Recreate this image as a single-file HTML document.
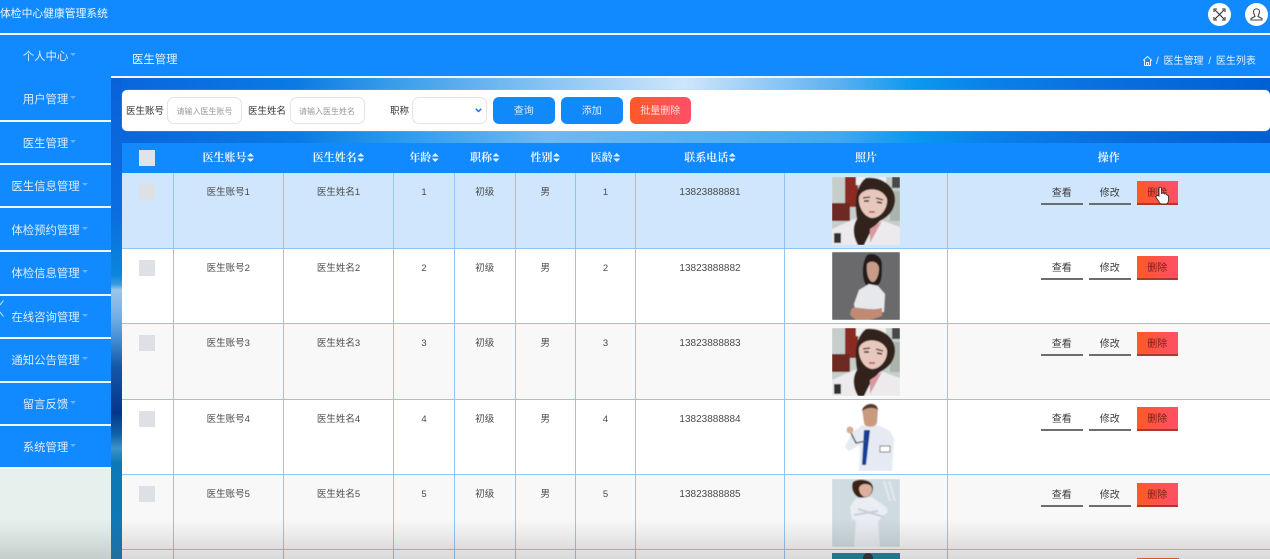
<!DOCTYPE html>
<html lang="zh-CN">
<head>
<meta charset="utf-8">
<title>体检中心健康管理系统</title>
<style>
*{box-sizing:border-box;margin:0;padding:0}
html,body{width:1270px;height:559px;overflow:hidden;background:#fff}
body{position:relative;font-family:"Liberation Sans","Noto Sans CJK SC",sans-serif;color:#444}
#wrap{position:absolute;left:0;top:0;width:1270px;height:559px;overflow:hidden;filter:blur(.35px)}
.abs{position:absolute}
#strip{left:111px;top:78px;width:11px;height:481px;background:linear-gradient(180deg,#0a62d8 0,#0a6ee0 28%,#0a86dc 41%,#3c9ce0 43%,#9cc6ea 44%,#6eaee4 50%,#3d88d0 55%,#1458a8 60%,#04358c 69.600%,#0e62a8 74%,#3a94c8 77%,#0d78b8 80%,#1078b4 100%)}
#hg1{left:122px;top:78px;width:1148px;height:18px;background:linear-gradient(90deg,#0a66dc 0,#0a7ae4 15%,#3a9eea 24%,#cfe6fb 49%,#5ab0f0 62.500%,#0b98f0 69%,#0a80e8 76%,#0a70de 85%,#0060d4 100%)}
#hg2{left:122px;top:125px;width:1148px;height:18px;background:linear-gradient(90deg,#0a66dc 0,#0a7ae4 15%,#2a9aee 24%,#70b8f2 37%,#40a8f0 62.500%,#0a98f0 69%,#0a80e8 76%,#0a70de 85%,#0060d4 100%)}
#top{left:0;top:0;width:1270px;height:33px;background:#1189ff}
#bar{left:0;top:35px;width:1270px;height:41px;background:#1189ff}
.wl{position:absolute;background:#eef6ff;height:2px}
#title{left:0;top:7px;font-size:10.8px;color:#f1f7ff;line-height:14px;white-space:nowrap}
#crumbT{left:132px;top:53px;font-size:11.4px;color:#e8f2ff;line-height:14px}
#crumb{left:1156px;top:55px;font-size:10px;color:#e3efff;line-height:14px;white-space:nowrap;word-spacing:2px}
.circ{position:absolute;width:23px;height:23px;border-radius:50%;background:#fff;top:3px}
#side{left:0;top:35px;width:111px;height:433px;background:#1189ff}
#sideb{left:0;top:468px;width:111px;height:91px;background:#e6f1ee}
.mi{position:absolute;left:0;width:99px;height:14px;text-align:center;font-size:11.4px;line-height:14px;color:#dcebff;white-space:nowrap}
.mi i{display:inline-block;width:0;height:0;border:3px solid transparent;border-top:3px solid #6fb0f2;border-bottom:0;margin-left:2px;vertical-align:4px}
#search{left:122px;top:90px;width:1148px;height:41px;background:#fff;border-radius:5px;box-shadow:0 0 1px #9fd0f8}
.lab{position:absolute;top:106px;font-size:9.5px;line-height:12px;color:#333;white-space:nowrap}
.inp{position:absolute;top:97px;width:75px;height:27px;border:1.5px solid #e3e3e3;border-radius:7px;background:#fff;font-size:8px;line-height:27px;text-align:center;color:#999}
.sbtn{position:absolute;top:97px;width:61.5px;height:27px;border-radius:6px;background:#1189f8;color:#d8ebff;font-size:10px;line-height:30px;text-align:center}
table{position:absolute;left:122px;top:143px;width:1148px;border-collapse:collapse;table-layout:fixed;font-size:9.5px;color:#4a4a4a}
th{height:30px;background:#1189ff;color:#e9f3ff;font:bold 11px/30px "Liberation Serif","Noto Serif CJK SC",serif;text-align:center;white-space:nowrap;border:0;padding:0}
th u{display:inline-block;text-decoration:none;width:7px;height:9px;margin-left:.5px;vertical-align:-1px;background:#e9f3ff;clip-path:path('M3.500 0L7 3.500H0ZM3.500 9L0 5.500H7Z')}
td{height:75.4px;border:1px solid #94c4f2;border-top:0;padding:13px 0 0;vertical-align:top;text-align:center;line-height:13px;white-space:nowrap;position:relative}
td:first-child{border-left:0}
td:last-child{border-right:0}
td.tel{font-size:10px}
tr.s td{background:#cfe6fd}
tr.w td{background:#fff}
tr.g td{background:#f8f8f8}
.cb{display:block;width:16px;height:16px;background:#dde0e4;margin:-2px 0 0 17px}
th .cb{display:inline-block;margin:0;vertical-align:middle;position:relative;left:-.5px;background:#e0e3e8}
.ph{position:absolute;left:47px;top:3.5px;width:68px;height:68px;display:block}
.a{position:absolute;top:7.5px;width:41.5px;height:24px;line-height:25px;font-size:10px;text-align:center;color:#3c3c3c;border-bottom:2px solid #6d6d6d}
.a.d{background:linear-gradient(90deg,#ff5828,#ff4f68);color:#7a1d1d;border-bottom-color:#a83a30}
#fade{left:0;top:518px;width:1270px;height:41px;background:linear-gradient(180deg,rgba(90,90,90,0),rgba(90,90,90,.06) 30%,rgba(80,80,80,.22) 100%);pointer-events:none}
</style>
</head>
<body>
<svg width="0" height="0" style="position:absolute">
<defs>
<filter id="b"><feGaussianBlur stdDeviation=".6"/></filter>
<symbol id="p1" viewBox="0 0 68 68">
<g filter="url(#b)"><rect width="68" height="68" fill="#c6cecb"/><rect x="13" y="0" width="13" height="30" fill="#8a2a22"/><rect x="0" y="26" width="18" height="18" fill="#6e2a24"/><rect x="24" y="0" width="30" height="8" fill="#eef0ee"/><rect x="60" y="0" width="8" height="11" fill="#4a4a48"/><rect x="58" y="14" width="10" height="30" fill="#aab4ac"/>
<path d="M0 52L22 42L46 42L68 50V68H0Z" fill="#eceaec"/>
<path d="M34 1C50-1 64 10 63 24C62 34 56 40 48 44L40 52L32 68L26 68C20 58 21 48 25 42C22 26 24 8 34 1Z" fill="#33231f"/>
<path d="M27 20C30 10 50 9 55 22C56 32 48 41 40 41C32 40 26 30 27 20Z" fill="#e8c8bc"/>
<path d="M31 21L38 20M44 21L51 23" stroke="#3a2a26" stroke-width="1.200"/><path d="M32 24L37 24M45 25L50 26" stroke="#2a1c1a" stroke-width="1.500"/><path d="M37 35L43 35" stroke="#b8555a" stroke-width="1.600"/>
<path d="M38 52L50 44L38 66Z" fill="#d89aa0"/>
<rect x="2" y="56" width="7" height="10" fill="#333"/></g>
</symbol>
<symbol id="p2" viewBox="0 0 68 68">
<g filter="url(#b)"><rect width="68" height="68" fill="#6a6a6c"/>
<path d="M35 3C42 0 50 4 50 13C50 22 50 30 46 33L34 33C30 28 29 12 35 3Z" fill="#231d1c"/>
<path d="M35 12C38 8 46 9 47 16C47 25 43 30 41 30C37 30 34 22 35 12Z" fill="#c99c88"/>
<path d="M37 32L27 38L22 52L24 62L52 60L53 42L46 34Z" fill="#e6e8ec"/>
<path d="M19 58C22 52 34 60 50 56L50 64L38 68L24 68L18 63Z" fill="#c08a74"/></g>
</symbol>
<symbol id="p4" viewBox="0 0 68 68">
<g filter="url(#b)"><rect width="68" height="68" fill="#fff"/>
<path d="M30 22L20 30L13 44L17 48L28 42L27 68L60 68L62 36L58 28L46 22Z" fill="#e6eaf3"/>
<path d="M30 6C33 0 45 0 46 6L45 20C43 25 33 25 32 20Z" fill="#c89a80"/><path d="M30 8C31-1 46-2 46 7C43 4 35 4 30 8Z" fill="#5a3a28"/>
<path d="M32 27L38 27L34 62L30 62Z" fill="#153f94"/>
<path d="M18 28L24 40L34 38" stroke="#555" stroke-width="1.4" fill="none"/><circle cx="18" cy="27" r="3.500" fill="#d5ae98"/><rect x="48" y="43" width="10" height="6" fill="#fff" stroke="#777"/></g>
</symbol>
<symbol id="p5" viewBox="0 0 68 68">
<g filter="url(#b)"><rect width="68" height="68" fill="#cfdbe0"/><path d="M52 2L58 22M57 2L63 22" stroke="#e2eaee" stroke-width="2"/>
<path d="M21 3C26-1 41 0 41 9C41 15 36 19 30 19C23 19 18 10 21 3Z" fill="#3e2418"/><path d="M27 9C29 3 40 4 40 10C40 15 36 18 33 18C29 17 27 13 27 9Z" fill="#dcb09c"/>
<path d="M24 19L18 28L20 40L24 42L22 68L48 68L46 42L56 33L54 28L40 18Z" fill="#eaedf3"/><path d="M22 36L46 32M26 30L52 38" stroke="#c9ced8" stroke-width="2"/></g>
</symbol>
</defs>
</svg>
<div id="wrap">
<div class="abs" id="strip"></div>
<div class="abs" id="hg1"></div>
<div class="abs" id="hg2"></div>

<div class="abs" id="top"></div>
<div class="wl" style="left:0;top:33px;width:1270px"></div>
<div class="abs" id="bar"></div>
<div class="wl" style="left:0;top:76px;width:1270px"></div>
<div class="abs" id="title">体检中心健康管理系统</div>
<div class="abs" id="crumbT">医生管理</div>
<svg class="abs" style="left:1142px;top:55px" width="11" height="12" viewBox="0 0 11 12" fill="none" stroke="#e3efff" stroke-width="1"><path d="M1 5.500L5.500 1.500L10 5.500M2.500 5V10.500H8.500V5M4.500 10.500V7.500H6.500V10.500"/></svg>
<div class="abs" id="crumb">/ 医生管理 / 医生列表</div>

<div class="circ" style="left:1207.500px"><svg width="23" height="23" viewBox="0 0 23 23" fill="none" stroke="#333" stroke-width="1.100"><path d="M7 7L16 16M16 7L7 16M6 9V6H9M14 6H17V9M17 14V17H14M9 17H6V14"/></svg></div>
<div class="circ" style="left:1244.500px"><svg width="23" height="23" viewBox="0 0 23 23" fill="none" stroke="#444" stroke-width="1.100"><path d="M8.500 8.500C8.500 5 14.500 5 14.500 8.500C14.500 11 13 12.500 13 13.500L17 15.500V17H6V15.500L10 13.500C10 12.500 8.500 11 8.500 8.500Z"/></svg></div>

<div class="abs" id="side"></div>
<div class="abs" id="sideb"></div>
<div class="wl" style="left:0;top:119.500px;width:111px"></div>
<div class="wl" style="left:0;top:163px;width:111px"></div>
<div class="wl" style="left:0;top:206.400px;width:111px"></div>
<div class="wl" style="left:0;top:249.800px;width:111px"></div>
<div class="wl" style="left:0;top:293.500px;width:111px"></div>
<div class="wl" style="left:0;top:337px;width:111px"></div>
<div class="wl" style="left:0;top:380.500px;width:111px"></div>
<div class="wl" style="left:0;top:423.800px;width:111px"></div>
<div class="wl" style="left:0;top:467px;width:111px"></div>
<div class="mi" style="top:49.500px">个人中心<i></i></div>
<div class="mi" style="top:93px">用户管理<i></i></div>
<div class="mi" style="top:136.500px">医生管理<i></i></div>
<div class="mi" style="top:180px">医生信息管理<i></i></div>
<div class="mi" style="top:223.500px">体检预约管理<i></i></div>
<div class="mi" style="top:267px">体检信息管理<i></i></div>
<div class="mi" style="top:310.500px">在线咨询管理<i></i></div>
<div class="mi" style="top:354px">通知公告管理<i></i></div>
<div class="mi" style="top:397.500px">留言反馈<i></i></div>
<div class="mi" style="top:441px">系统管理<i></i></div>
<svg class="abs" style="left:0;top:299px" width="6" height="19" viewBox="0 0 6 19" fill="none" stroke="#cfe4fa" stroke-width="1"><path d="M3.500 1.500L0 6M0 13L3.500 17.500"/></svg>

<div class="abs" id="search"></div>
<div class="lab" style="left:126px">医生账号</div>
<div class="inp" style="left:167px">请输入医生账号</div>
<div class="lab" style="left:248px">医生姓名</div>
<div class="inp" style="left:289.500px">请输入医生姓名</div>
<div class="lab" style="left:390px">职称</div>
<div class="inp" style="left:412px"><svg style="position:absolute;right:4px;top:10px" width="7" height="5" viewBox="0 0 7 5" fill="none" stroke="#1a74d0" stroke-width="1.500"><path d="M.8 .8L3.500 3.500L6.200 .8"/></svg></div>
<div class="sbtn" style="left:493px">查询</div>
<div class="sbtn" style="left:561px">添加</div>
<div class="sbtn" style="left:629.500px;background:linear-gradient(90deg,#ff5828,#ff4f68);color:#ffdcd8">批量删除</div>

<table>
<colgroup><col style="width:51px"><col style="width:110.500px"><col style="width:110px"><col style="width:61px"><col style="width:60.500px"><col style="width:60.500px"><col style="width:60px"><col style="width:149px"><col style="width:163px"><col style="width:322.500px"></colgroup>
<tr><th><span class="cb"></span></th><th>医生账号<u></u></th><th>医生姓名<u></u></th><th>年龄<u></u></th><th>职称<u></u></th><th>性别<u></u></th><th>医龄<u></u></th><th>联系电话<u></u></th><th>照片</th><th>操作</th></tr>
<tr class="s"><td><span class="cb"></span></td><td>医生账号1</td><td>医生姓名1</td><td>1</td><td>初级</td><td>男</td><td>1</td><td class="tel">13823888881</td><td><svg class="ph"><use href="#p1"/></svg></td><td><div class="a" style="left:93px">查看</div><div class="a" style="left:141px">修改</div><div class="a d" style="left:188.500px">删除</div></td></tr>
<tr class="w"><td><span class="cb"></span></td><td>医生账号2</td><td>医生姓名2</td><td>2</td><td>初级</td><td>男</td><td>2</td><td class="tel">13823888882</td><td><svg class="ph"><use href="#p2"/></svg></td><td><div class="a" style="left:93px">查看</div><div class="a" style="left:141px">修改</div><div class="a d" style="left:188.500px">删除</div></td></tr>
<tr class="g"><td><span class="cb"></span></td><td>医生账号3</td><td>医生姓名3</td><td>3</td><td>初级</td><td>男</td><td>3</td><td class="tel">13823888883</td><td><svg class="ph"><use href="#p1"/></svg></td><td><div class="a" style="left:93px">查看</div><div class="a" style="left:141px">修改</div><div class="a d" style="left:188.500px">删除</div></td></tr>
<tr class="w"><td><span class="cb"></span></td><td>医生账号4</td><td>医生姓名4</td><td>4</td><td>初级</td><td>男</td><td>4</td><td class="tel">13823888884</td><td><svg class="ph"><use href="#p4"/></svg></td><td><div class="a" style="left:93px">查看</div><div class="a" style="left:141px">修改</div><div class="a d" style="left:188.500px">删除</div></td></tr>
<tr class="g"><td><span class="cb"></span></td><td>医生账号5</td><td>医生姓名5</td><td>5</td><td>初级</td><td>男</td><td>5</td><td class="tel">13823888885</td><td><svg class="ph"><use href="#p5"/></svg></td><td><div class="a" style="left:93px">查看</div><div class="a" style="left:141px">修改</div><div class="a d" style="left:188.500px">删除</div></td></tr>
</table>

<div class="abs" style="left:122px;top:549.500px;width:1148px;height:9.500px;background:#fff;overflow:hidden">
<div class="abs" style="left:710px;top:3.500px;width:68px;height:6px;background:#15809c"></div>
<div class="abs" style="left:741px;top:3.500px;width:10px;height:6px;background:#2a2a2a;border-radius:5px 5px 0 0"></div>
<div class="abs" style="left:1015px;top:8.500px;width:41.500px;height:1px;background:#ff5828"></div>
<div class="abs" style="left:51px;top:0;width:1px;height:9.500px;background:#94c4f2"></div>
<div class="abs" style="left:161px;top:0;width:1px;height:9.500px;background:#94c4f2"></div>
<div class="abs" style="left:271px;top:0;width:1px;height:9.500px;background:#94c4f2"></div>
<div class="abs" style="left:332px;top:0;width:1px;height:9.500px;background:#94c4f2"></div>
<div class="abs" style="left:393px;top:0;width:1px;height:9.500px;background:#94c4f2"></div>
<div class="abs" style="left:453px;top:0;width:1px;height:9.500px;background:#94c4f2"></div>
<div class="abs" style="left:513px;top:0;width:1px;height:9.500px;background:#94c4f2"></div>
<div class="abs" style="left:662px;top:0;width:1px;height:9.500px;background:#94c4f2"></div>
<div class="abs" style="left:825px;top:0;width:1px;height:9.500px;background:#94c4f2"></div>
</div>

<svg class="abs" style="left:1155px;top:186px" width="14" height="19" viewBox="0 0 14 19"><path d="M4 10V2.500C4 .8 6.500 .8 6.500 2.500V7.500C7.500 6.800 9 7 9.500 8C10.500 7.500 11.500 8 12 9C13 9 13.500 10 13.500 11V14C13.500 16 12.500 18 11 18H6.500C5 18 4.500 16.500 3.500 15L1 11.500C.5 10 2.500 9 4 10Z" fill="#fff" stroke="#333" stroke-width=".9"/></svg>

<div class="abs" id="fade"></div>
</div>
</body>
</html>
